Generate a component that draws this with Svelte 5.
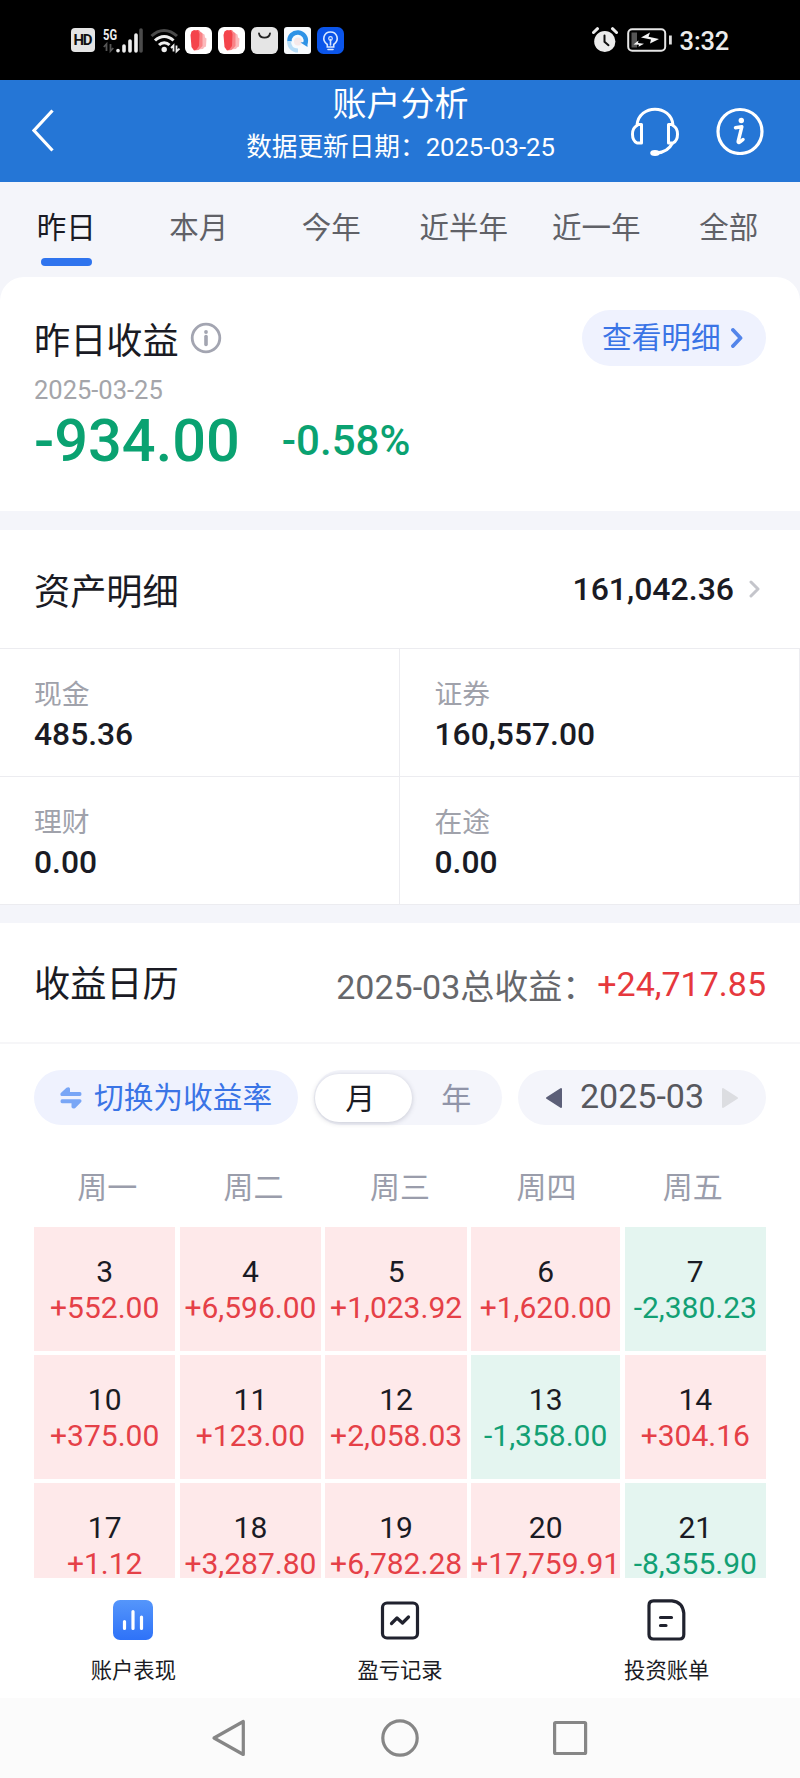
<script lang="ts">
  type Day = { day: number; amount: string };

  const tabs = ['昨日', '本月', '今年', '近半年', '近一年', '全部'];
  let activeTab = $state('昨日');

  const assets = [
    { label: '现金', value: '485.36' },
    { label: '证券', value: '160,557.00' },
    { label: '理财', value: '0.00' },
    { label: '在途', value: '0.00' },
  ];

  const weekdays = ['周一', '周二', '周三', '周四', '周五'];
  const days: Day[] = [
    { day: 3, amount: '+552.00' },
    { day: 4, amount: '+6,596.00' },
    { day: 5, amount: '+1,023.92' },
    { day: 6, amount: '+1,620.00' },
    { day: 7, amount: '-2,380.23' },
    { day: 10, amount: '+375.00' },
    { day: 11, amount: '+123.00' },
    { day: 12, amount: '+2,058.03' },
    { day: 13, amount: '-1,358.00' },
    { day: 14, amount: '+304.16' },
    { day: 17, amount: '+1.12' },
    { day: 18, amount: '+3,287.80' },
    { day: 19, amount: '+6,782.28' },
    { day: 20, amount: '+17,759.91' },
    { day: 21, amount: '-8,355.90' },
  ];

  let mode = $state('月');
</script>

{#snippet brushApp()}
  <svg class="app-icon" width="27" height="27" viewBox="0 0 27 27">
    <rect width="27" height="27" rx="6" fill="#fff" />
    <path d="M13 4.500l3 .5 1.500 1.500 2 1 .5 3 1.500 1-.5 8-2 1-1 1.500-5 .5z" fill="#fbb9bb" />
    <path d="M10 3.500l4-.5 1.500 2 2 1.500V19l-2 2-2 2-4 .5z" fill="#f98286" />
    <path d="M5.500 8l1-3.500L9 3l2 .5L13 3l1.500 4-.5 12-2.500 3.500L9 23.500 6.500 20z" fill="#f4444b" />
  </svg>
{/snippet}

<div class="screen">
  <div class="status">
    <div class="status-left">
      <svg width="24" height="24" viewBox="0 0 24 24">
        <rect width="24" height="24" rx="4" fill="#e4e4e4" />
        <text x="12" y="17.3" text-anchor="middle" textLength="19" font-size="15" font-weight="700" fill="#111">HD</text>
      </svg>
      <svg class="signal" width="40" height="27" viewBox="0 0 40 27">
        <text x="0" y="12.5" textLength="14" lengthAdjust="spacingAndGlyphs" font-size="14.5" font-weight="700" fill="#eee">5G</text>
        <path d="M3.5 24V17L.8 20M7.5 17v7l2.8-3" fill="none" stroke="#555" stroke-width="1.8" />
        <g stroke="#eee" stroke-width="3.6" stroke-linecap="round">
          <path d="M15 23.5v.3M21 19v5M27 14v10M33 8v16" />
          <path d="M38 3v21" stroke="#4b4b4b" />
        </g>
      </svg>
      <svg class="wifi" width="31" height="27" viewBox="0 0 31 27">
        <g fill="none" stroke-width="3">
          <path d="M1.5 9C9 1.5 19 1.5 27 9" stroke="#4a4a4a" />
          <path d="M5 13.5C10.500 8 18 8 23.500 13.500" stroke="#eee" />
          <path d="M9 18c3-3 7.500-3 10.500 0" stroke="#eee" />
        </g>
        <circle cx="14.200" cy="22.500" r="2.700" fill="#eee" />
        <path d="M23.500 24.500v-6l-2.500 2.500M26.500 18.500v6l3-2.800" fill="none" stroke="#eee" stroke-width="1.800" />
      </svg>
      {@render brushApp()}
      {@render brushApp()}
      <svg class="app-icon" width="27" height="27" viewBox="0 0 27 27">
        <rect width="27" height="27" rx="6" fill="#e5e5e5" />
        <path d="M8 6.500c1 5.500 10 5.500 11 0" fill="none" stroke="#222" stroke-width="1.800" stroke-linecap="round" />
      </svg>
      <svg class="app-icon" width="27" height="27" viewBox="0 0 27 27">
        <rect width="27" height="27" rx="3" fill="#f7fafd" />
        <path d="M5.500 14.500a8.200 8.200 0 1 1 16 1.500" fill="none" stroke="#2e93e6" stroke-width="4.500" />
        <path d="M5 14c0 6 4 9.500 9 9.500" fill="none" stroke="#b5dcf8" stroke-width="4" />
        <circle cx="14" cy="14.500" r="4" fill="#f6e9ea" />
        <path d="M16.500 15.500l7-1v5.500z" fill="#2e93e6" />
      </svg>
      <svg class="app-icon" width="27" height="27" viewBox="0 0 27 27">
        <rect width="27" height="27" rx="6.500" fill="#0b55ea" />
        <path d="M10.300 17.500C4 13 7 5 13.500 5s9.500 8 3.200 12.500V20h-6.400zM13.500 18v-5.500M11 22.500h5" fill="none" stroke="#dbe8ff" stroke-width="1.600" stroke-linecap="round" />
        <circle cx="13.500" cy="11.500" r="1.800" fill="none" stroke="#dbe8ff" stroke-width="1.200" />
      </svg>
    </div>
    <div class="status-right">
      <svg width="26" height="26" viewBox="0 0 26 26">
        <circle cx="12.800" cy="14.500" r="10.600" fill="#ececec" />
        <path d="M1.500 5.500l4-3.800M24.500 5.500l-4-3.800" stroke="#ececec" stroke-width="3" stroke-linecap="round" />
        <path d="M12.500 8.500v6.300l4 3.400" fill="none" stroke="#111" stroke-width="2" stroke-linecap="round" />
      </svg>
      <svg class="battery" width="46" height="24" viewBox="0 0 46 24">
        <rect x="1.200" y="1.200" width="37" height="21.600" rx="4" fill="none" stroke="#e6e6e6" stroke-width="2" />
        <rect x="4.500" y="4.500" width="5.500" height="15" fill="#555" />
        <path d="M42 7.500h2.800v9H42z" fill="#ddd" />
        <path d="M14 9.500l9-5-1.500 4.300L32 11l-9 4.500 1-4zM6.500 16.500l5-4-.5 2.500 6 .8-5.500 3 .5-2z" fill="#f4f4f4" />
      </svg>
      <span class="clock">3:32</span>
    </div>
  </div>

  <header class="header">
    <svg class="back" width="24" height="44" viewBox="0 0 24 44">
      <path d="M21.500 1.500L3 21.500l18.500 20" fill="none" stroke="#fff" stroke-width="3.200" />
    </svg>
    <div class="heading">
      <h1>账户分析</h1>
      <p>数据更新日期：2025-03-25</p>
    </div>
    <div class="header-actions">
      <svg width="48" height="50" viewBox="0 0 48 50" fill="none" stroke="#fff" stroke-width="3">
        <path d="M6 18C8 -3 40 -3 42 18" />
        <path d="M6 18.500c-6 3-6 14.500 0 17.500h4.500V17.500H6.500zM42 18.500c6 3 6 14.500 0 17.500h-4.500V17.500h4z" stroke-linejoin="round" />
        <path d="M41.500 36c-3 6-8 9.500-16 10" />
        <ellipse cx="24" cy="46" rx="4.800" ry="3" fill="#fff" stroke="none" />
      </svg>
      <svg width="48" height="48" viewBox="0 0 48 48">
        <circle cx="24" cy="24.500" r="22" fill="none" stroke="#fff" stroke-width="3.200" />
        <circle cx="25.300" cy="13.500" r="2.700" fill="#fff" />
        <path d="M19.500 20.800l6.300-1-3.600 14.500c-.3 2 1.500 1.200 4.800-1.800" fill="none" stroke="#fff" stroke-width="3.500" stroke-linecap="round" stroke-linejoin="round" />
      </svg>
    </div>
  </header>

  <nav class="tabs">
    {#each tabs as tab}
      <button class="tab" class:active={tab === activeTab} onclick={() => (activeTab = tab)}>{tab}</button>
    {/each}
  </nav>

  <section class="profit">
    <div class="profit-head">
      <h2>昨日收益</h2>
      <svg class="hint" width="32" height="32" viewBox="0 0 32 32">
        <circle cx="16" cy="16" r="13.800" fill="none" stroke="#a3a5b1" stroke-width="2.800" />
        <circle cx="16" cy="10" r="1.900" fill="#a3a5b1" />
        <path d="M16 14.500v8" stroke="#a3a5b1" stroke-width="3.600" stroke-linecap="round" />
      </svg>
      <button class="detail">
        <span>查看明细</span>
        <svg width="13" height="20" viewBox="0 0 13 20">
          <path d="M2 2l7.500 8L2 18" fill="none" stroke="#5385ea" stroke-width="3.800" stroke-linecap="round" stroke-linejoin="round" />
        </svg>
      </button>
    </div>
    <div class="profit-date">2025-03-25</div>
    <div class="profit-value">
      <span class="money">-934.00</span>
      <span class="percent">-0.58%</span>
    </div>
  </section>

  <section class="assets">
    <div class="assets-head">
      <h2>资产明细</h2>
      <span class="total">161,042.36</span>
      <svg width="12" height="18" viewBox="0 0 12 18">
        <path d="M2 2l7 7-7 7" fill="none" stroke="#c4c5cb" stroke-width="3" stroke-linecap="round" stroke-linejoin="round" />
      </svg>
    </div>
    <div class="assets-grid">
      {#each assets as a}
        <div class="asset">
          <span class="label">{a.label}</span>
          <span class="value">{a.value}</span>
        </div>
      {/each}
    </div>
  </section>

  <section class="calendar">
    <div class="calendar-head">
      <h2>收益日历</h2>
      <span class="sum-label">2025-03总收益：</span>
      <span class="sum">+24,717.85</span>
    </div>
    <div class="controls">
      <button class="switch">
        <svg width="22" height="24" viewBox="0 0 22 24">
          <path d="M1.500 10H20q1.500 0 1.500-2T20 6H10V2.500Q9 .3 6.500 1.800L.8 7Q-.3 9.500 1.500 10zM20 13.300H2q-1.500 0-1.500 2t1.500 2h9.500v4q1.500 2.200 3.800.6l5.900-6q1-2-1.200-2.600z" fill="#79a6f6" />
        </svg>
        <span>切换为收益率</span>
      </button>
      <div class="toggle">
        {#each ['月', '年'] as m}
          <button class:on={m === mode} onclick={() => (mode = m)}>{m}</button>
        {/each}
      </div>
      <div class="month">
        <svg width="18" height="22" viewBox="0 0 18 22">
          <path d="M16 2v18L2 11z" fill="#5c5f78" stroke="#5c5f78" stroke-width="2" stroke-linejoin="round" />
        </svg>
        <span>2025-03</span>
        <svg width="18" height="22" viewBox="0 0 18 22">
          <path d="M2 2v18l14-9z" fill="#dcdde1" stroke="#dcdde1" stroke-width="2" stroke-linejoin="round" />
        </svg>
      </div>
    </div>
    <div class="weekdays">
      {#each weekdays as w}
        <span>{w}</span>
      {/each}
    </div>
    <div class="days">
      {#each days as d (d.day)}
        <div class="day" class:loss={d.amount.startsWith('-')}>
          <span class="num">{d.day}</span>
          <span class="amount">{d.amount}</span>
        </div>
      {/each}
    </div>
  </section>

  <nav class="bottom">
    <div class="bottom-item">
      <svg width="44" height="44" viewBox="0 0 44 44">
        <defs>
          <linearGradient id="tile" x1="0" y1="0" x2="0" y2="1">
            <stop offset="0" stop-color="#5596fb" />
            <stop offset="1" stop-color="#2e72f8" />
          </linearGradient>
        </defs>
        <rect x="2" y="2" width="40" height="40" rx="7" fill="url(#tile)" />
        <path d="M13.500 23.500v7M22 13.500v17M30.500 19v11.500" stroke="#fff" stroke-width="3.200" stroke-linecap="round" />
      </svg>
      <span>账户表现</span>
    </div>
    <div class="bottom-item">
      <svg width="44" height="44" viewBox="0 0 44 44" fill="none" stroke="#20222e" stroke-linejoin="round" stroke-linecap="round">
        <rect x="4.500" y="5" width="35" height="35" rx="4.500" stroke-width="3.200" />
        <path d="M13.500 25.500l5.500-5.500 5.500 5 6-6" stroke-width="3.200" />
      </svg>
      <span>盈亏记录</span>
    </div>
    <div class="bottom-item">
      <svg width="44" height="44" viewBox="0 0 44 44" fill="none" stroke="#20222e" stroke-linejoin="round" stroke-linecap="round">
        <path d="M8.500 2.800H27C34 3.500 38 8 38.800 15V36.500Q38.800 41 34.500 41H8.500Q4 41 4 36.500V7.500Q4 2.800 8.500 2.800z" stroke-width="3.200" />
        <path d="M15.500 19.500h11M15.500 27.500h5.500" stroke-width="3.200" />
      </svg>
      <span>投资账单</span>
    </div>
  </nav>

  <div class="system-nav">
    <svg width="36" height="40" viewBox="0 0 36 40">
      <path d="M32.300 3.500v33L3 20z" fill="none" stroke="#868686" stroke-width="3.200" stroke-linejoin="round" />
    </svg>
    <svg width="40" height="40" viewBox="0 0 40 40">
      <circle cx="20" cy="20" r="17.200" fill="none" stroke="#868686" stroke-width="3.200" />
    </svg>
    <svg width="36" height="36" viewBox="0 0 36 36">
      <rect x="1.600" y="2.500" width="31" height="31" rx="1" fill="none" stroke="#868686" stroke-width="3.200" />
    </svg>
  </div>
</div>

<style>
  :global(body) { margin: 0; background: #fff; }
  * { box-sizing: border-box; }
  svg { display: block; flex: none; }
  h1, h2, p { margin: 0; font-weight: 400; }
  button { border: 0; padding: 0; margin: 0; background: none; font: inherit; color: inherit; }

  .screen {
    width: 800px; height: 1778px; overflow: hidden;
    display: flex; flex-direction: column;
    font-family: Roboto, "Noto Sans CJK SC", sans-serif;
    color: #1a1b24; background: #f4f5fa; white-space: nowrap;
  }

  .status {
    height: 80px; flex: none; background: #000; color: #ececec;
    display: flex; justify-content: space-between; align-items: center;
    padding: 0 71px;
  }
  .status-left, .status-right { display: flex; align-items: center; }
  .signal { margin-left: 8px; }
  .wifi { margin: 0 4px 0 7px; }
  .app-icon + .app-icon { margin-left: 6px; }
  .battery { margin: 0 7px 0 9px; }
  .clock { font-size: 25.500px; line-height: 30px; padding-top: 2px; font-weight: 500; letter-spacing: -.2px; }

  .header {
    height: 102px; flex: none; background: #2576d6; color: #fff;
    display: flex; justify-content: space-between; padding: 0 36px 0 31px;
  }
  .back { margin-top: 29px; }
  .heading { text-align: center; padding: 1px 0 0 115px; }
  .heading h1 { font-size: 34px; line-height: 46px; }
  .heading p { font-size: 25.700px; line-height: 40px; letter-spacing: -.05px; }
  .header-actions { display: flex; gap: 37px; margin-top: 27px; }

  .tabs { height: 95px; flex: none; display: flex; padding-right: 5px; }
  .tab {
    flex: 1; font-size: 29.500px; line-height: 40px; color: #606167;
    padding: 26px 0 10px; display: flex; flex-direction: column; align-items: center;
  }
  .tab.active { color: #1a1b24; }
  .tab.active::after { content: ""; width: 51px; height: 8px; margin-top: 10px; border-radius: 4px; background: #2f74ee; }

  .profit { height: 234px; flex: none; background: #fff; border-radius: 24px 24px 0 0; padding: 33px 34px 0; }
  .profit-head { display: flex; height: 56px; align-items: center; }
  h2 { font-size: 36.200px; line-height: 48px; padding-top: 7px; }
  .hint { margin: 0 auto 0 11px; }
  .detail {
    height: 56px; width: 184px; border-radius: 28px; background: #eff2fe; color: #3a74e6;
    font-size: 29.700px; display: flex; align-items: center; padding: 0 0 0 20px; gap: 10px;
  }
  .detail span { padding-bottom: 5px; }
  .profit-date { font-size: 25.500px; line-height: 30px; margin-top: 9px; color: #a4a5aa; }
  .profit-value { display: flex; align-items: center; color: #0aa271; font-weight: 500; height: 66px; margin-top: 3px; }
  .money { font-size: 59.500px; line-height: 66px; }
  .percent { font-size: 42px; line-height: 66px; margin-left: 42px; }

  .assets { margin-top: 19px; background: #fff; flex: none; }
  .assets-head { height: 119px; display: flex; align-items: center; padding: 0 39px 0 34px; border-bottom: 1px solid #ececf0; }
  .total { margin-left: auto; margin-right: 15px; font-size: 32px; font-weight: 500; }
  .assets-grid { display: grid; grid-template-columns: 1fr 1fr; }
  .asset {
    height: 128px; padding: 27px 0 0 34px; display: flex; flex-direction: column;
    border-right: 1px solid #ececf0; border-bottom: 1px solid #ececf0;
  }
  .asset:nth-child(even) { padding-left: 34.500px; }
  .label { font-size: 27.800px; line-height: 38px; color: #a0a2ab; }
  .value { font-size: 31.800px; line-height: 41px; font-weight: 500; }

  .calendar { flex: 1; min-height: 0; overflow: hidden; margin-top: 18px; background: #fff; }
  .calendar-head { height: 121px; display: flex; align-items: center; padding: 0 34px; border-bottom: 2px solid #f6f6f8; }
  .calendar-head h2 { padding-top: 4px; }
  .sum-label { margin-left: auto; margin-right: 1px; font-size: 34px; color: #66676b; padding-top: 4px; }
  .sum { font-size: 34px; color: #e6383d; padding-top: 2px; }

  .controls { display: flex; justify-content: space-between; padding: 26px 34px 0; font-size: 30px; }
  .controls > * { height: 55px; border-radius: 28px; background: #f4f5fb; }
  .switch { width: 264px; display: flex; align-items: center; gap: 12px; padding: 0 0 0 26px; background: #eff2fe; color: #3a74e6; }
  .switch span { font-size: 29.700px; padding-bottom: 5px; }
  .toggle { width: 188px; display: flex; align-items: center; padding: 0 1px; color: #9094a8; }
  .toggle button { width: 90px; height: 48px; padding-bottom: 6px; }
  .toggle .on { width: 97px; padding-right: 6px; border-radius: 24px; background: #fff; color: #1a1b24; box-shadow: 0 1px 5px rgba(60, 65, 90, .25); }
  .month { width: 248px; display: flex; align-items: center; justify-content: center; gap: 17px; font-size: 34px; color: #57585e; }
  .month span { padding-bottom: 3px; }

  .weekdays { display: flex; padding: 42px 34px 0; font-size: 30px; line-height: 42px; color: #9a9dab; }
  .weekdays span { flex: 1; text-align: center; }

  .days {
    display: grid; gap: 4px 4.300px; padding: 18px 34px 0;
    grid-template-columns: 1fr 1fr 1fr 149.200px 1fr; grid-auto-rows: 124.200px;
  }
  .day {
    background: #fee9ea; color: #e54047; font-size: 30px; line-height: 36px;
    display: flex; flex-direction: column; align-items: center; padding-top: 27px;
  }
  .day.loss { background: #e4f5f0; color: #12a074; }
  .num { color: #1a1b24; }

  .bottom { height: 120px; flex: none; background: #fff; display: flex; padding-top: 20px; }
  .bottom-item { flex: 1; display: flex; flex-direction: column; align-items: center; font-size: 21.300px; line-height: 30px; gap: 14px; }

  .system-nav { height: 80px; flex: none; background: #fbfbfb; display: flex; justify-content: center; align-items: center; gap: 133px; }
</style>
